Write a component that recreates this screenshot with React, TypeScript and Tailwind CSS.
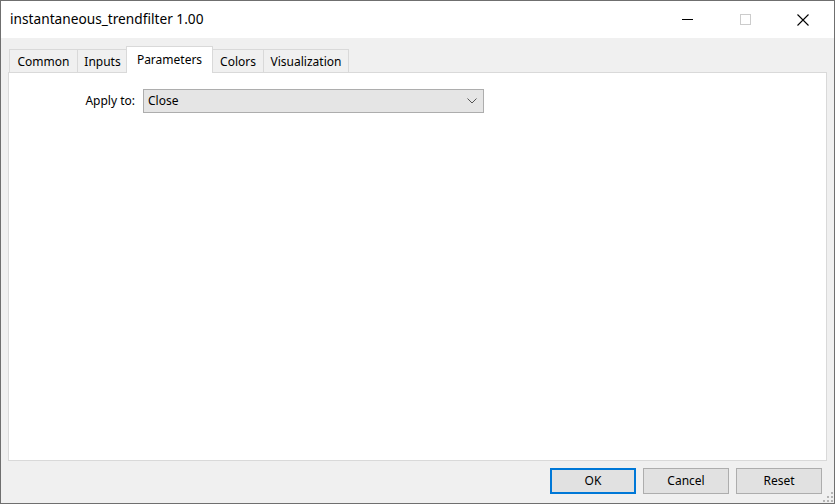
import React from 'react';

const tabs = [
  { label: 'Common', w: 'w-[68px]' },
  { label: 'Inputs', w: 'w-[50px]' },
  { label: 'Parameters', w: 'w-[87px]' },
  { label: 'Colors', w: 'w-[51px]' },
  { label: 'Visualization', w: 'w-[86px]' },
];

const TitleBar: React.FC = () => (
  <div className="flex h-[37px] items-center bg-white">
    <div className="flex-1 pl-[9px] text-[13.7px] text-black">instantaneous_trendfilter 1.00</div>
    <div className="flex h-full pr-[2px]">
      <div className="flex w-[58px] items-center justify-center">
        <svg width="11" height="11" viewBox="0 0 11 11">
          <path d="M0 5.5h11" stroke="#000" strokeWidth="1" />
        </svg>
      </div>
      <div className="flex w-[58px] items-center justify-center">
        <svg width="11" height="11" viewBox="0 0 11 11">
          <rect x="0.5" y="0.5" width="10" height="10" fill="none" stroke="#cccccc" strokeWidth="1" />
        </svg>
      </div>
      <div className="flex w-[58px] items-center justify-center">
        <svg width="12" height="12" viewBox="0 0 12 12">
          <path d="M0.5 0.5l11 11M11.5 0.5l-11 11" stroke="#000" strokeWidth="1.1" />
        </svg>
      </div>
    </div>
  </div>
);

const Tabs: React.FC = () => (
  <div className="flex h-[26px] items-end pl-[8px]">
    {tabs.map((t) => {
      const active = t.label === 'Parameters';
      return active ? (
        <div
          key={t.label}
          className={
            'relative z-10 -mb-px -mx-px flex h-[27px] items-start justify-center border border-b-0 border-[#d9d9d9] bg-white pt-[4px] text-[12px] text-black ' +
            t.w
          }
        >
          {t.label}
        </div>
      ) : (
        <div
          key={t.label}
          className={
            'flex h-[23px] items-center justify-center border border-b-0 border-r-0 border-[#d9d9d9] bg-[#f0f0f0] pt-[1px] text-[12px] text-black last:border-r ' +
            t.w
          }
        >
          {t.label}
        </div>
      );
    })}
  </div>
);

const Panel: React.FC = () => (
  <div className="mx-[7px] h-[389px] border border-[#d9d9d9] bg-white">
    <div className="flex items-center pt-[16px]">
      <div className="w-[134px] pr-[8px] text-right text-[12px] text-black">Apply to:</div>
      <div className="flex h-[24px] w-[341px] items-center justify-between border border-[#adadad] bg-[#e5e5e5] pl-[4px] pr-[6px] text-[12px] text-black">
        <span>Close</span>
        <svg width="10" height="6" viewBox="0 0 10 6">
          <path d="M0.5 0.5l4.5 4.5 4.5-4.5" fill="none" stroke="#555" strokeWidth="1" />
        </svg>
      </div>
    </div>
  </div>
);

const Btn: React.FC<{ label: string; primary?: boolean }> = ({ label, primary }) => (
  <div
    className={
      'flex h-[26px] w-[86px] items-center justify-center bg-[#e1e1e1] text-[12px] text-black ' +
      (primary ? 'border-2 border-[#0078d7]' : 'border border-[#adadad]')
    }
  >
    {label}
  </div>
);

export default function App() {
  return (
    <div
      className="flex h-[504px] w-[835px] flex-col border border-[#6f6f6f] bg-[#f0f0f0]"
      style={{ fontFamily: '"Noto Sans", "Open Sans", sans-serif' }}
    >
      <TitleBar />
      <div className="pt-[8px]">
        <Tabs />
      </div>
      <Panel />
      <div className="relative flex flex-1 items-start justify-end gap-[7px] pr-[12px] pt-[7px]">
        <Btn label="OK" primary />
        <Btn label="Cancel" />
        <Btn label="Reset" />
        <svg className="absolute bottom-[1px] right-[1px]" width="10" height="10" viewBox="0 0 10 10">
          <g fill="#b4b4b4">
            <rect x="8" y="0" width="2" height="2" />
            <rect x="4" y="4" width="2" height="2" />
            <rect x="8" y="4" width="2" height="2" />
            <rect x="0" y="8" width="2" height="2" />
            <rect x="4" y="8" width="2" height="2" />
            <rect x="8" y="8" width="2" height="2" />
          </g>
        </svg>
      </div>
    </div>
  );
}
